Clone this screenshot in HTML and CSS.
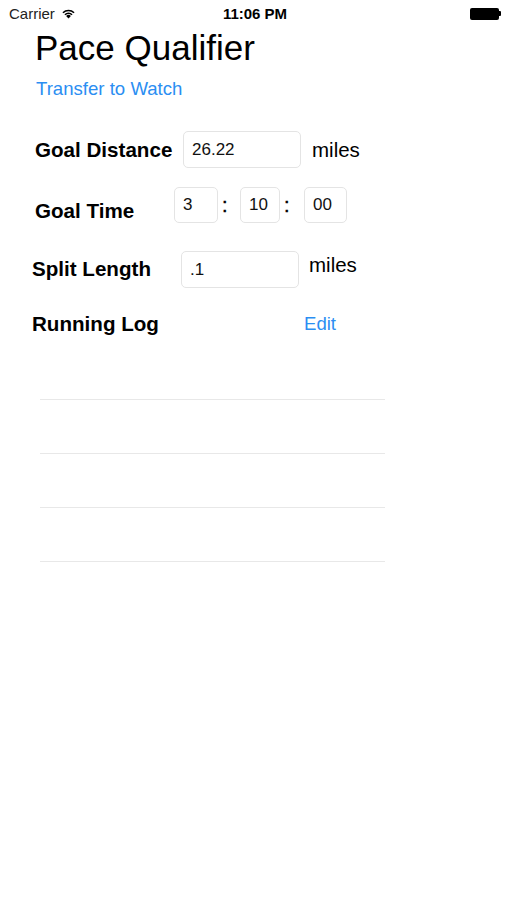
FILE: index.html
```html
<!DOCTYPE html>
<html lang="en">
<head>
<meta charset="UTF-8" />
<meta name="viewport" content="width=device-width, initial-scale=1.0" />
<title>Pace Qualifier</title>
<link rel="stylesheet" href="styles.css">
</head>
<body>
<div class="status-bar">
    <div class="carrier">
        Carrier
        <svg class="wifi" width="15" height="11" viewBox="0 0 14 11">
            <path d="M7 10.5 L4.6 8 A3.4 3.4 0 0 1 9.4 8 Z" fill="#000"/>
            <path d="M2.9 6.2 A5.9 5.9 0 0 1 11.1 6.2 L10 7.3 A4.4 4.4 0 0 0 4 7.3 Z" fill="#000"/>
            <path d="M0.9 4.2 A8.7 8.7 0 0 1 13.1 4.2 L12 5.3 A7.2 7.2 0 0 0 2 5.3 Z" fill="#000"/>
        </svg>
    </div>
    <div class="clock">11:06 PM</div>
    <div class="battery"><span class="battery-body"></span><span class="battery-nub"></span></div>
</div>

<div class="screen">
    <h1 class="title">Pace Qualifier</h1>
    <a class="link transfer">Transfer to Watch</a>

    <div class="row row-distance">
        <span class="label">Goal Distance</span>
        <div class="field field-wide">26.22</div>
        <span class="unit">miles</span>
    </div>

    <div class="row row-time">
        <span class="label">Goal Time</span>
        <div class="field field-h">3</div>
        <span class="colon">:</span>
        <div class="field field-m">10</div>
        <span class="colon">:</span>
        <div class="field field-s">00</div>
    </div>

    <div class="row row-split">
        <span class="label">Split Length</span>
        <div class="field field-wide">.1</div>
        <span class="unit">miles</span>
    </div>

    <div class="row row-log">
        <span class="label">Running Log</span>
        <a class="link edit">Edit</a>
    </div>

    <div class="log-table">
        <div class="log-row"></div>
        <div class="log-row"></div>
        <div class="log-row"></div>
    </div>
</div>
</body>
</html>
```

FILE: styles.css
```css
* {
    margin: 0;
    padding: 0;
    box-sizing: border-box;
}
body {
    font-family: "Liberation Sans", Arial, sans-serif;
    background: #fff;
    color: #000;
    width: 507px;
    height: 900px;
}
.status-bar {
    height: 27px;
    display: grid;
    grid-template-columns: 1fr auto 1fr;
    align-items: center;
    padding: 0 6px 0 9px;
    font-size: 15px;
}
.carrier {
    display: flex;
    align-items: center;
    gap: 6px;
    color: #222;
}
.clock {
    font-weight: bold;
    font-size: 15px;
}
.battery {
    display: flex;
    align-items: center;
    justify-content: flex-end;
}
.battery-body {
    width: 29px;
    height: 12px;
    background: #000;
    border-radius: 2px;
}
.battery-nub {
    width: 2px;
    height: 5px;
    background: #000;
    border-radius: 0 1px 1px 0;
}
.screen {
    padding: 0 0 0 35px;
}
.title {
    font-weight: normal;
    font-size: 35px;
    line-height: 42px;
}
.link {
    color: #2b8ef2;
    font-size: 18.6px;
}
.transfer {
    display: block;
    margin-top: 8px;
    margin-left: 1px;
    line-height: 24px;
}
.row {
    display: flex;
    align-items: center;
}
.label {
    font-weight: bold;
    font-size: 20.6px;
}
.field {
    height: 37px;
    border: 1px solid #e4e4e4;
    border-radius: 5px;
    font-size: 17px;
    display: flex;
    align-items: center;
    padding-left: 8px;
    color: #111;
}
.field-wide {
    width: 118px;
}
.unit {
    font-size: 20.5px;
}
.row-distance {
    margin-top: 30px;
}
.row-distance .label {
    width: 148px;
}
.row-distance .unit {
    margin-left: 11px;
}
.row-time {
    margin-top: 19px;
}
.row-time .label {
    width: 139px;
    margin-top: 12px;
}
.row-time .field {
    height: 36px;
}
.field-h { width: 44px; }
.field-m { width: 40px; }
.field-s { width: 43px; }
.row-time .colon {
    width: 22px;
    padding-left: 4px;
    font-size: 20px;
    -webkit-text-stroke: 0.4px #000;
}
.row-time .colon + .field-s {
    margin-left: 2px;
}
.row-split {
    margin-top: 28px;
    margin-left: -3px;
}
.row-split .label {
    width: 149px;
    margin-top: -2px;
}
.row-split .unit {
    margin-left: 10px;
    margin-top: -9px;
}
.row-log {
    margin-top: 24px;
    margin-left: -3px;
}
.row-log .label {
    width: 272px;
}
.log-table {
    margin-top: 63px;
    margin-left: 5px;
    width: 345px;
    border-top: 1px solid #e8e8e8;
}
.log-row {
    height: 54px;
    border-bottom: 1px solid #e8e8e8;
}
```
